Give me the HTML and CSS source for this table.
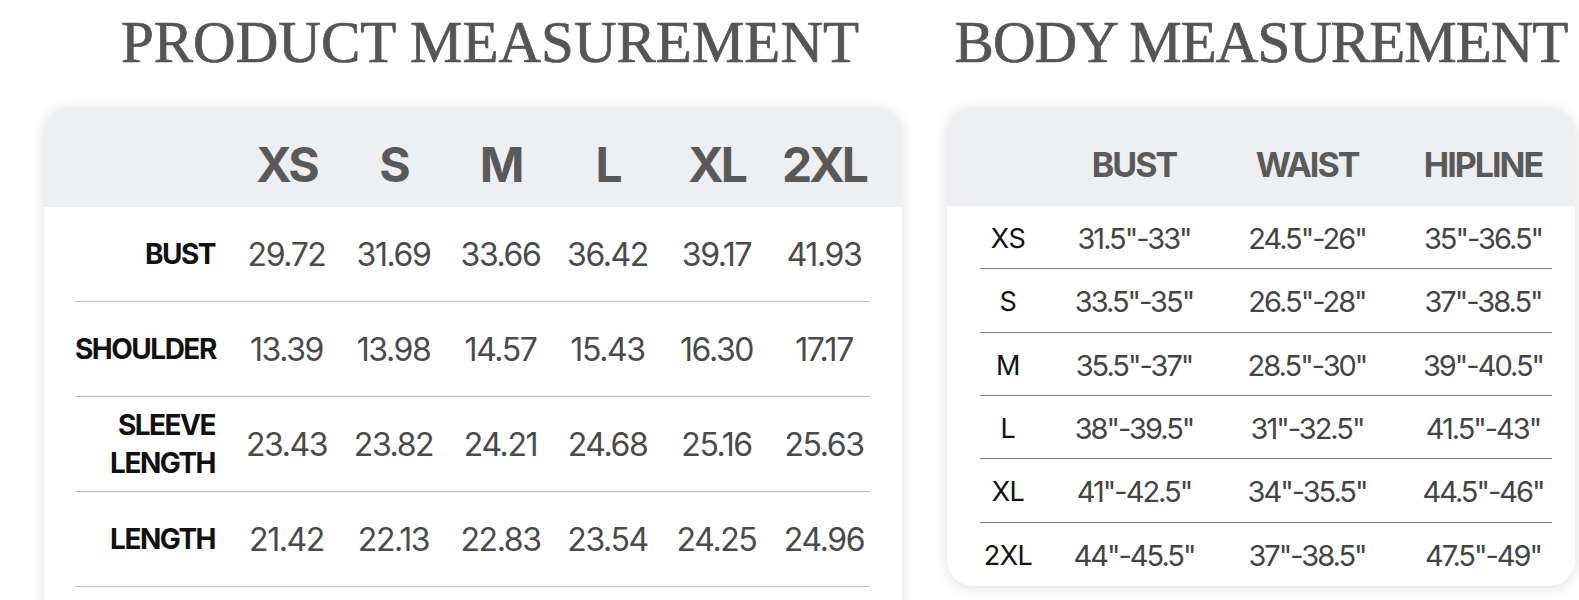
FILE: index.html
```html
<!DOCTYPE html>
<html>
<head>
<meta charset="utf-8">
<link rel="stylesheet" href="styles.css">
</head>
<body>
<main class="page">
  <section class="panel panel-product">
    <h1 class="title title-product">PRODUCT MEASUREMENT</h1>
    <div class="card card-product">
      <div class="thead grid-p">
        <span></span><span>XS</span><span>S</span><span>M</span><span>L</span><span>XL</span><span>2XL</span>
      </div>
      <div class="trow grid-p">
        <span class="lbl">BUST</span><span>29.72</span><span>31.69</span><span>33.66</span><span>36.42</span><span>39.17</span><span>41.93</span>
      </div>
      <div class="trow grid-p">
        <span class="lbl">SHOULDER</span><span>13.39</span><span>13.98</span><span>14.57</span><span>15.43</span><span>16.30</span><span>17.17</span>
      </div>
      <div class="trow grid-p">
        <span class="lbl lbl-2">SLEEVE<br>LENGTH</span><span>23.43</span><span>23.82</span><span>24.21</span><span>24.68</span><span>25.16</span><span>25.63</span>
      </div>
      <div class="trow grid-p">
        <span class="lbl">LENGTH</span><span>21.42</span><span>22.13</span><span>22.83</span><span>23.54</span><span>24.25</span><span>24.96</span>
      </div>
    </div>
  </section>
  <section class="panel panel-body">
    <h1 class="title title-body">BODY MEASUREMENT</h1>
    <div class="card card-body">
      <div class="bhead grid-b">
        <span></span><span>BUST</span><span>WAIST</span><span class="c3">HIPLINE</span>
      </div>
      <div class="brow grid-b"><span class="sz">XS</span><span>31.5"-33"</span><span>24.5"-26"</span><span class="c3">35"-36.5"</span></div>
      <div class="brow grid-b"><span class="sz">S</span><span>33.5"-35"</span><span>26.5"-28"</span><span class="c3">37"-38.5"</span></div>
      <div class="brow grid-b"><span class="sz">M</span><span>35.5"-37"</span><span>28.5"-30"</span><span class="c3">39"-40.5"</span></div>
      <div class="brow grid-b"><span class="sz">L</span><span>38"-39.5"</span><span>31"-32.5"</span><span class="c3">41.5"-43"</span></div>
      <div class="brow grid-b"><span class="sz">XL</span><span>41"-42.5"</span><span>34"-35.5"</span><span class="c3">44.5"-46"</span></div>
      <div class="brow grid-b last"><span class="sz">2XL</span><span>44"-45.5"</span><span>37"-38.5"</span><span class="c3">47.5"-49"</span></div>
    </div>
  </section>
</main>
</body>
</html>
```

FILE: styles.css
```css
* { box-sizing: border-box; }
html, body {
  margin: 0;
  padding: 0;
  background: #ffffff;
  height: 600px;
  overflow: hidden;
}
.page {
  display: flex;
  align-items: flex-start;
  gap: 45px;
  padding-left: 44px;
  font-family: "Inter", "Noto Sans", sans-serif;
}
.panel { display: flex; flex-direction: column; }
.panel-product { width: 858px; }
.panel-body { width: 628px; }

.title {
  margin: 13px 0 35px;
  font-family: "Liberation Serif", "Times New Roman", serif;
  font-weight: 400;
  font-size: 59px;
  line-height: 59px;
  height: 59px;
  color: #555555;
  -webkit-text-stroke: 0.7px #555555;
  white-space: nowrap;
  text-align: center;
}
.title-product { padding-left: 34px; }
.title-body { letter-spacing: -1px; padding-left: 0; }

.card {
  background: #ffffff;
  border-radius: 26px;
  box-shadow: 0 2px 14px rgba(0, 0, 0, 0.13);
  overflow: hidden;
}
.card-product { height: 540px; }
.card-body { height: 479px; }

/* product table */
.grid-p {
  display: grid;
  grid-template-columns: 158px repeat(5, 107px) 102px;
  align-items: center;
  text-align: center;
}
.grid-p > span:nth-child(6) { padding-left: 4px; }
.grid-p > span:nth-child(7) { padding-left: 10px; }
.thead {
  height: 100px;
  padding: 16px 32px 0 31px;
  background: #eeeff1;
  font-weight: 700;
  font-size: 48px;
  line-height: 84px;
  letter-spacing: -3px;
  color: #595959;
}
.thead span { height: 84px; }
.trow {
  height: 95px;
  margin: 0 32px 0 31px;
  border-bottom: 1px solid #bdbdbd;
  font-size: 32px;
  letter-spacing: -1.4px;
  color: #4a4a4a;
}
.trow:first-of-type { height: 97px; }
.lbl {
  text-align: right;
  padding-right: 18px;
  font-weight: 700;
  font-size: 28px;
  letter-spacing: -1.5px;
  color: #111111;
}
.lbl-2 { line-height: 38px; }

/* body table */
.grid-b {
  display: grid;
  grid-template-columns: 56px 196px 150px 1fr;
  align-items: center;
  text-align: center;
}
.grid-b .c3 { padding-left: 32px; }
.bhead {
  height: 99px;
  padding: 16px 23px 0 33px;
  background: #eeeff1;
  font-weight: 700;
  font-size: 34px;
  line-height: 83px;
  letter-spacing: -2px;
  color: #5a5a5a;
}
.brow {
  height: 63.33px;
  margin: 0 23px 0 33px;
  padding-top: 3px;
  border-bottom: 1px solid #808080;
  font-size: 29px;
  letter-spacing: -2px;
  color: #444444;
}
.brow.last { border-bottom: none; }
.sz {
  font-size: 27px;
  letter-spacing: -0.5px;
  color: #111111;
}
```
